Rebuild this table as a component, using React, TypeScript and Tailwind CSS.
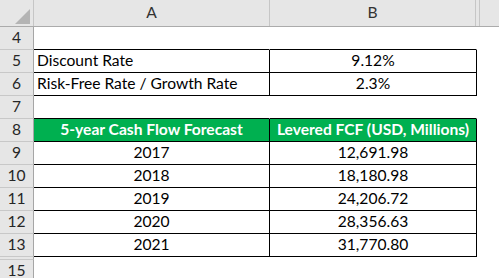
import React from "react";

type Row = {
  n: string;
  a?: string;
  b?: string;
  kind: "blank" | "label" | "head" | "data";
};

const rows: Row[] = [
  { n: "4", kind: "blank" },
  { n: "5", a: "Discount Rate", b: "9.12%", kind: "label" },
  { n: "6", a: "Risk-Free Rate / Growth Rate", b: "2.3%", kind: "label" },
  { n: "7", kind: "blank" },
  { n: "8", a: "5-year Cash Flow Forecast", b: "Levered FCF (USD, Millions)", kind: "head" },
  { n: "9", a: "2017", b: "12,691.98", kind: "data" },
  { n: "10", a: "2018", b: "18,180.98", kind: "data" },
  { n: "11", a: "2019", b: "24,206.72", kind: "data" },
  { n: "12", a: "2020", b: "28,356.63", kind: "data" },
  { n: "13", a: "2021", b: "31,770.80", kind: "data" },
];

const font = { fontFamily: "Lato, 'Liberation Sans', sans-serif" };

export default function App() {
  return (
    <div className="w-[499px] h-[278px] overflow-hidden bg-white text-[15.6px] leading-none text-black" style={font}>
      {/* column header */}
      <div className="flex h-[27px] bg-[#e6e6e6] border-b border-[#ababab]">
        <div className="w-[34px] shrink-0 border-r border-[#c6c6c6] flex items-end justify-end pr-[3px] pb-[2px]">
          <svg width="15" height="15" viewBox="0 0 15 15">
            <polygon points="15,0 15,15 0,15" fill="#b4b4b4" />
          </svg>
        </div>
        <div className="w-[236px] shrink-0 border-r border-[#c6c6c6] flex items-center justify-center text-[#333]">A</div>
        <div className="w-[206px] shrink-0 border-r border-[#c6c6c6] flex items-center justify-center text-[#333]">B</div>
        <div className="w-[4px] shrink-0 border-r border-[#c6c6c6]" />
        <div className="flex-1" />
      </div>
      {rows.map((r) => {
        const table = r.kind !== "blank";
        return (
          <div key={r.n} className="flex h-[23px]">
            <div className="w-[34px] shrink-0 bg-[#e6e6e6] border-r border-[#a6a6a6] border-b border-b-[#c8c8c8] flex items-center justify-center text-[#262626]">
              {r.n}
            </div>
            <div
              className={
                "w-[236px] shrink-0 border-b border-b-black flex items-center " +
                (table ? "border-r border-r-black " : "border-r border-r-white ") +
                (r.kind === "head" ? "bg-[#00b050] text-white font-bold justify-center " : "") +
                (r.kind === "label" ? "pl-[3px] " : "") +
                (r.kind === "data" ? "justify-center " : "")
              }
            >
              {r.a}
            </div>
            <div
              className={
                "w-[207px] shrink-0 border-b border-b-black flex items-center justify-center " +
                (table ? "border-r border-r-black " : "border-r border-r-white ") +
                (r.kind === "head" ? "bg-[#00b050] text-white font-bold " : "")
              }
            >
              {r.b}
            </div>
            <div className="flex-1" />
          </div>
        );
      })}
      {/* hidden row 14 marker + row 15 */}
      <div className="flex h-[3px]">
        <div className="w-[34px] shrink-0 bg-[#e6e6e6] border-r border-[#a6a6a6] border-b border-b-[#c8c8c8]" />
      </div>
      <div className="flex h-[23px]">
        <div className="w-[34px] shrink-0 bg-[#e6e6e6] border-r border-[#a6a6a6] border-b border-b-[#c8c8c8] flex items-center justify-center text-[#262626]">
          15
        </div>
        <div className="flex-1" />
      </div>
    </div>
  );
}
